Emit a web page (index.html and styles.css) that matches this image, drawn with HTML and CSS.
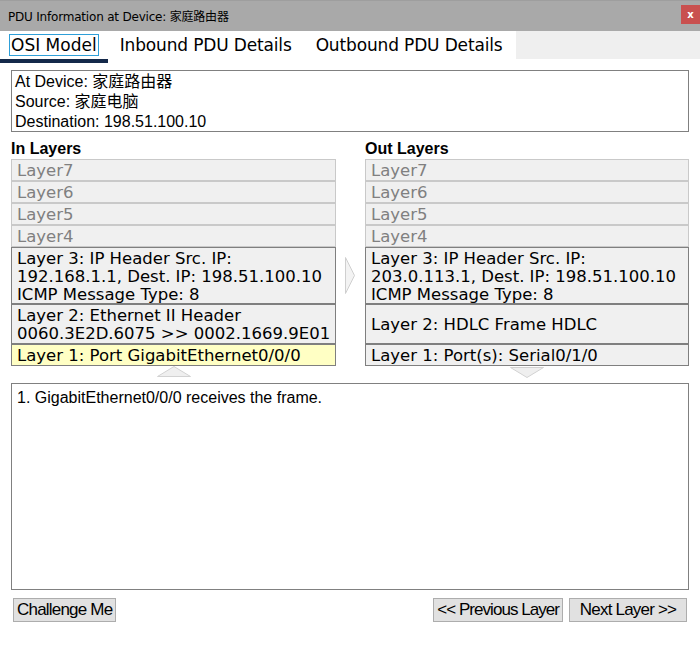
FILE: index.html
```html
<!DOCTYPE html>
<html lang="en">
<head>
    <meta charset="UTF-8">
    <meta name="viewport" content="width=device-width, initial-scale=1.0">
    <title>PDU Information</title>
    <link rel="stylesheet" href="styles.css">
</head>
<body>
    <div class="titlebar">
        <span class="title">PDU Information at Device: 家庭路由器</span>
        <span class="close">x</span>
    </div>

    <div class="tabbar">
        <div class="tabs">
            <div class="tab active"><span class="focus">OSI Model</span></div>
            <div class="tab">Inbound PDU Details</div>
            <div class="tab">Outbound PDU Details</div>
        </div>
    </div>

    <div class="content">
        <div class="info">
            <div>At Device: 家庭路由器</div>
            <div>Source: 家庭电脑</div>
            <div>Destination: 198.51.100.10</div>
        </div>

        <div class="layers">
            <div class="heading">In Layers</div>
            <div></div>
            <div class="heading">Out Layers</div>

            <div class="layer off">Layer7</div>
            <div></div>
            <div class="layer off">Layer7</div>

            <div class="layer off">Layer6</div>
            <div></div>
            <div class="layer off">Layer6</div>

            <div class="layer off">Layer5</div>
            <div></div>
            <div class="layer off">Layer5</div>

            <div class="layer off">Layer4</div>
            <div></div>
            <div class="layer off">Layer4</div>

            <div class="layer">Layer 3: IP Header Src. IP:<br>192.168.1.1, Dest. IP: 198.51.100.10<br>ICMP Message Type: 8</div>
            <div class="mid">
                <svg width="11" height="37" viewBox="0 0 11 37"><polygon points="0.5,0.5 9.5,18.5 0.5,36.5" fill="#f3f3f3" stroke="#cfcfcf"/></svg>
            </div>
            <div class="layer">Layer 3: IP Header Src. IP:<br>203.0.113.1, Dest. IP: 198.51.100.10<br>ICMP Message Type: 8</div>

            <div class="layer">Layer 2: Ethernet II Header<br>0060.3E2D.6075 &gt;&gt; 0002.1669.9E01</div>
            <div></div>
            <div class="layer">Layer 2: HDLC Frame HDLC</div>

            <div class="layer current">Layer 1: Port GigabitEthernet0/0/0</div>
            <div></div>
            <div class="layer">Layer 1: Port(s): Serial0/1/0</div>

            <div class="arrow up">
                <svg width="34" height="11" viewBox="0 0 34 11"><polygon points="0.5,10.5 17,0.5 33.5,10.5" fill="#efefef" stroke="#d2d2d2"/></svg>
            </div>
            <div></div>
            <div class="arrow down">
                <svg width="34" height="11" viewBox="0 0 34 11"><polygon points="0.5,0.5 17,10.5 33.5,0.5" fill="#efefef" stroke="#d2d2d2"/></svg>
            </div>
        </div>

        <div class="description">1. GigabitEthernet0/0/0 receives the frame.</div>

        <div class="buttons">
            <button>Challenge Me</button>
            <div class="nav">
                <button class="prev">&lt;&lt; Previous Layer</button>
                <button class="next">Next Layer &gt;&gt;</button>
            </div>
        </div>
    </div>
</body>
</html>
```

FILE: styles.css
```css
body {
    margin: 0;
    background: #fff;
    font-family: "Liberation Sans", Arial, "Noto Sans CJK SC", sans-serif;
    color: #000;
}
.titlebar {
    height: 31px;
    background-color: #a9a9a9;
    border-top: 1px solid #9e9e9e;
    box-sizing: border-box;
    display: flex;
    align-items: center;
    justify-content: space-between;
    padding-left: 8px;
}
.title {
    font-family: "DejaVu Sans", "Noto Sans CJK SC", sans-serif;
    font-size: 12px;
    letter-spacing: -0.2px;
    color: #000;
    margin-top: -2px;
}
.close {
    width: 19px;
    height: 19px;
    margin-top: -3px;
    background-color: #c9504f;
    color: #fff;
    font-family: "DejaVu Sans", sans-serif;
    font-weight: bold;
    font-size: 10px;
    display: flex;
    align-items: center;
    justify-content: center;
}
.tabbar {
    height: 28px;
    background-color: #efefef;
    display: flex;
}
.tabs {
    display: flex;
    background: #fff;
}
.tab {
    font-family: "DejaVu Sans", sans-serif;
    font-size: 17px;
    letter-spacing: -0.15px;
    padding: 4px 12px 0 12px;
    color: #000;
}
.tab:last-child {
    padding-right: 13px;
}
.tab.active {
    padding-left: 10px;
    padding-right: 10px;
    letter-spacing: 0;
    border-bottom: 4px solid #14294a;
    height: 24px;
}
.focus {
    outline: 1px solid #2e9fd8;
    padding: 0 1px;
}
.content {
    padding: 11px 11px 0 11px;
}
.info {
    border: 1px solid #808080;
    height: 59px;
    padding: 1px 3px 0 3px;
    font-size: 16px;
    line-height: 20px;
}
.layers {
    display: grid;
    grid-template-columns: 325px 29px 324px;
    grid-template-rows: 20px 22px 22px 22px 22px 57px 40px 22px 17px;
    margin-top: 7px;
}
.heading {
    font-weight: bold;
    font-size: 16px;
    line-height: 20px;
}
.layer {
    font-family: "DejaVu Sans", sans-serif;
    font-size: 16.5px;
    line-height: 18px;
    background-color: #f0f0f0;
    border: 1px solid #7f7f7f;
    padding: 2px 5px 0 5px;
    display: flex;
    flex-direction: column;
    justify-content: center;
    white-space: nowrap;
    overflow: hidden;
}
.layer.off {
    color: #808080;
    border-color: #c9c9c9;
}
.layer.current {
    background-color: #ffffc4;
}
.mid {
    display: flex;
    align-items: center;
    justify-content: center;
}
.arrow {
    display: flex;
    justify-content: center;
}
.arrow.down {
    padding-top: 1px;
}
.description {
    border: 1px solid #808080;
    height: 197px;
    padding: 4px 5px;
    font-size: 16px;
    line-height: 20px;
}
.buttons {
    display: flex;
    justify-content: space-between;
    margin-top: 8px;
    padding: 0 2px;
}
.nav {
    display: flex;
    gap: 6px;
}
button {
    font-family: "Liberation Sans", Arial, sans-serif;
    font-size: 17px;
    letter-spacing: -0.8px;
    background-color: #e1e1e1;
    border: 1px solid #adadad;
    height: 24px;
    padding: 0 3px;
    color: #000;
}
button.prev {
    letter-spacing: -0.95px;
}
button.next {
    min-width: 118px;
}
```
